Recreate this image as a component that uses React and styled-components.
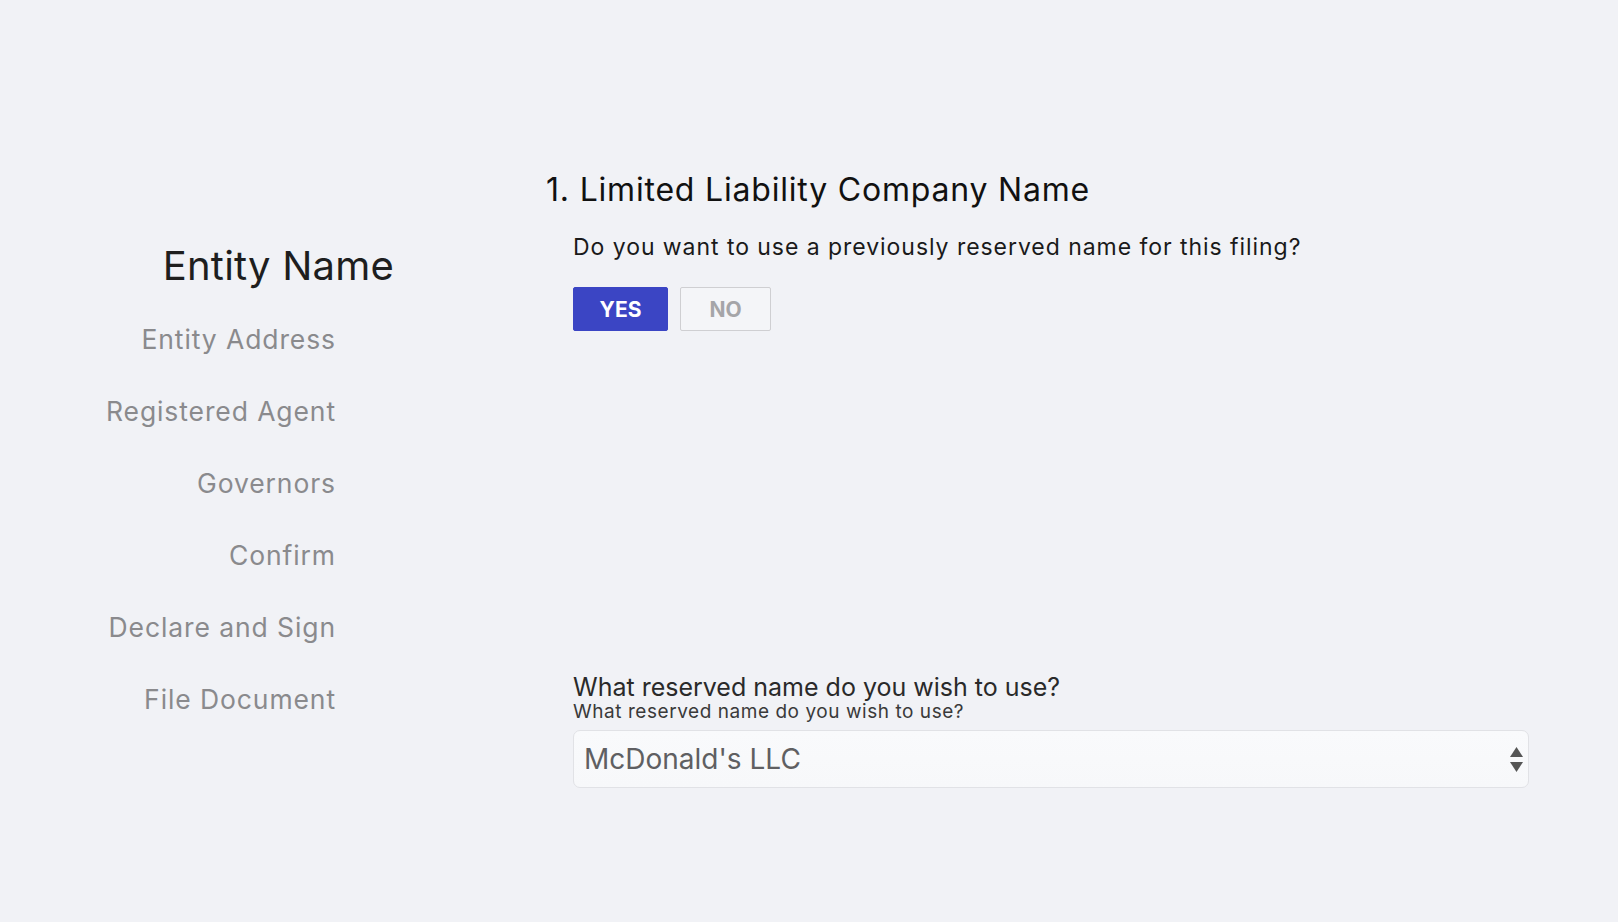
import React from 'react'
import styled, { createGlobalStyle } from 'styled-components'

const GlobalStyle = createGlobalStyle`
  body {
    margin: 0;
    background: #f1f2f6;
    font-family: Inter, 'Open Sans', sans-serif;
  }
`

const Page = styled.div`
  display: flex;
  height: 922px;
  overflow: hidden;
`

const Sidebar = styled.nav`
  width: 336px;
  padding-top: 242px;
  display: flex;
  flex-direction: column;
  align-items: flex-end;
`

const ActiveStep = styled.div`
  font-size: 40px;
  line-height: 48px;
  letter-spacing: 0.2px;
  color: #1e1e1e;
  margin-right: -58px;
  margin-bottom: 13px;
`

const Step = styled.div`
  font-size: 26.5px;
  line-height: 72px;
  letter-spacing: 0.9px;
  color: #8a8a8d;
`

const Main = styled.main`
  margin-left: 210px;
  padding-top: 170px;
  width: 983px;
`

const Heading = styled.h1`
  margin: 0 0 22px;
  font-size: 32px;
  line-height: 40px;
  font-weight: 400;
  color: #111;
  letter-spacing: 0.8px;
`

const Body = styled.div`
  padding-left: 27px;
`

const Question = styled.p`
  margin: 0 0 25px;
  font-size: 23px;
  line-height: 30px;
  letter-spacing: 0.95px;
  color: #1a1a1a;
`

const ButtonRow = styled.div`
  display: flex;
  gap: 12px;
  margin-bottom: 341px;
`

const ToggleButton = styled.button`
  width: ${(p) => (p.active ? '95px' : '91px')};
  height: 44px;
  border-radius: 2px;
  border: 1px solid ${(p) => (p.active ? '#3b45c4' : '#cfcfd2')};
  background: ${(p) => (p.active ? '#3b45c4' : '#f4f5f8')};
  color: ${(p) => (p.active ? '#fff' : '#a5a5a8')};
  font-family: inherit;
  font-size: 21px;
  font-weight: 700;
`

const Label = styled.div`
  font-size: 25px;
  line-height: 30px;
  color: #2a2a2a;
`

const SubLabel = styled.div`
  margin: -1px 0 7px;
  font-size: 19px;
  line-height: 22px;
  letter-spacing: 0.55px;
  color: #3a3a3a;
`

const SelectBox = styled.div`
  display: flex;
  align-items: center;
  justify-content: space-between;
  box-sizing: border-box;
  width: 956px;
  height: 58px;
  padding: 0 5px 0 10px;
  background: linear-gradient(#f9fafc, #f7f8fa);
  border: 1px solid #e1e2e6;
  border-radius: 7px;
  font-size: 28px;
  color: #5f5f62;
`

const Arrows = () => (
  <svg width="13" height="25" viewBox="0 0 13 25">
    <path d="M6.5 0 L13 10 L0 10 Z" fill="#555" />
    <path d="M0 15 L13 15 L6.5 25 Z" fill="#555" />
  </svg>
)

const steps = ['Entity Address', 'Registered Agent', 'Governors', 'Confirm', 'Declare and Sign', 'File Document']

export default function App() {
  return (
    <Page>
      <GlobalStyle />
      <Sidebar>
        <ActiveStep>Entity Name</ActiveStep>
        {steps.map((s) => (
          <Step key={s}>{s}</Step>
        ))}
      </Sidebar>
      <Main>
        <Heading>1. Limited Liability Company Name</Heading>
        <Body>
          <Question>Do you want to use a previously reserved name for this filing?</Question>
          <ButtonRow>
            <ToggleButton active>YES</ToggleButton>
            <ToggleButton>NO</ToggleButton>
          </ButtonRow>
          <Label>What reserved name do you wish to use?</Label>
          <SubLabel>What reserved name do you wish to use?</SubLabel>
          <SelectBox>
            <span>McDonald's LLC</span>
            <Arrows />
          </SelectBox>
        </Body>
      </Main>
    </Page>
  )
}
